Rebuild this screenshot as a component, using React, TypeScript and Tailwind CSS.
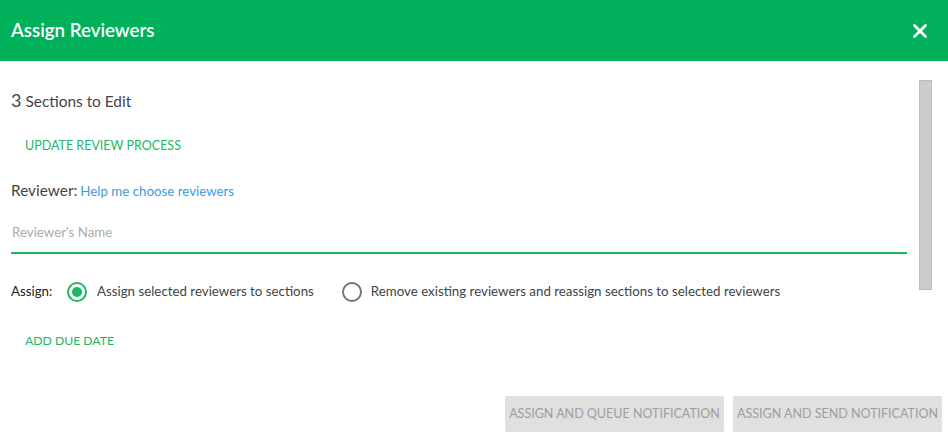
import { X } from "lucide-react";

function Radio({ checked }: { checked: boolean }) {
  return (
    <span
      className={`flex h-5 w-5 shrink-0 items-center justify-center rounded-full border-2 ${
        checked ? "border-[#1cb864]" : "border-[#757575]"
      }`}
    >
      {checked ? <span className="h-[10px] w-[10px] rounded-full bg-[#1cb864]" /> : null}
    </span>
  );
}

export default function App() {
  return (
    <div className="h-[436px] w-[948px] overflow-hidden bg-white font-['Lato',sans-serif] text-[#333]">
      <header className="flex h-[61px] items-center justify-between bg-[#00b05a] pl-[11px] pr-[17px]">
        <h1 className="text-[18.7px] font-semibold text-white">Assign Reviewers</h1>
        <X className="h-[22px] w-[22px] text-white" strokeWidth={3} />
      </header>

      <div className="flex">
        <div className="flex-1 pl-[11px] pr-[12px]">
          <div className="mt-[26px] flex items-baseline gap-[4px]">
            <span className="text-[18px] text-[#444]">3</span>
            <span className="text-[15.4px] text-[#444]">Sections to Edit</span>
          </div>

          <button type="button" className="ml-[14px] mt-[23px] text-[12.5px] text-[#1cb864]">
            UPDATE REVIEW PROCESS
          </button>

          <div className="mt-[23px] flex items-baseline gap-[3px]">
            <span className="text-[15.4px] text-[#444]">Reviewer:</span>
            <a className="text-[13.3px] text-[#3b9be0]">Help me choose reviewers</a>
          </div>

          <div className="mt-[17px] border-b-2 border-[#1cb864] pb-[9px]">
            <span className="pl-[1px] text-[13.3px] text-[#aaa]">Reviewer's Name</span>
          </div>

          <div className="mt-[28px] flex items-center text-[13.3px]">
            <span className="w-[56px] text-[#222]">Assign:</span>
            <label className="flex items-center gap-[10px]">
              <Radio checked />
              <span className="text-[#444]">Assign selected reviewers to sections</span>
            </label>
            <label className="ml-[28px] flex items-center gap-[9px]">
              <Radio checked={false} />
              <span className="text-[#444]">Remove existing reviewers and reassign sections to selected reviewers</span>
            </label>
          </div>

          <button type="button" className="ml-[14px] mt-[30px] text-[12.2px] text-[#1cb864]">
            ADD DUE DATE
          </button>
        </div>

        <div className="mr-[16px] mt-[19px] h-[210px] w-[13px] border border-[#bbb] bg-[#cccccc]" />
      </div>

      <div className="mt-[45px] flex justify-end gap-[9px] pr-[6px]">
        <button
          type="button"
          className="h-[36px] w-[219px] whitespace-nowrap rounded-[2px] bg-[#e0e0e0] text-[12.5px] text-[#9e9e9e]"
        >
          ASSIGN AND QUEUE NOTIFICATION
        </button>
        <button
          type="button"
          className="h-[36px] w-[209px] whitespace-nowrap rounded-[2px] bg-[#e0e0e0] text-[12.5px] text-[#9e9e9e]"
        >
          ASSIGN AND SEND NOTIFICATION
        </button>
      </div>
    </div>
  );
}
